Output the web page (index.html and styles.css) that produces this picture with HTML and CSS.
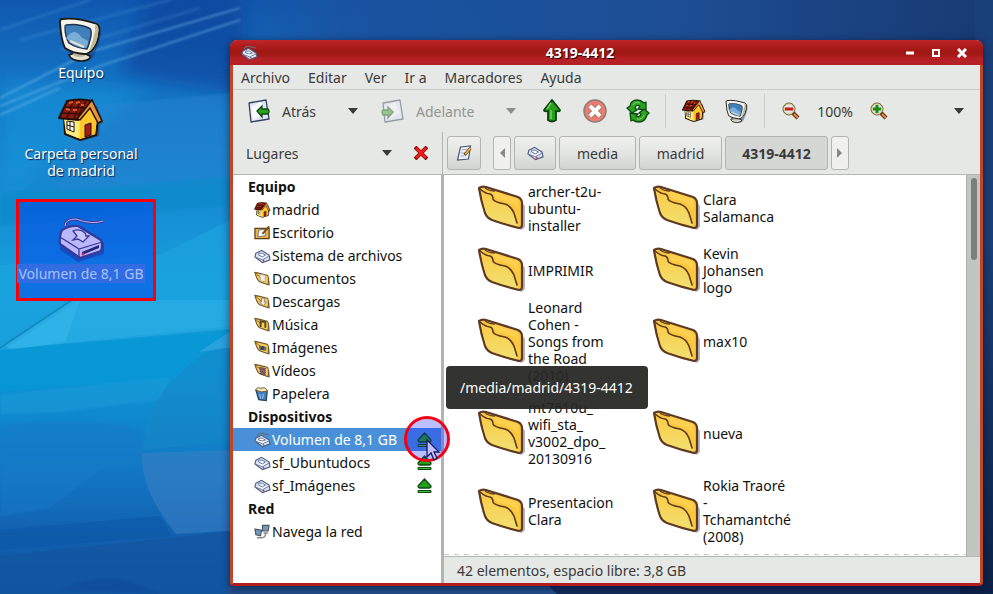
FILE: index.html
```html
<!DOCTYPE html>
<html lang="es">
<head>
<meta charset="utf-8">
<title>4319-4412</title>
<link rel="stylesheet" href="styles.css">
</head>
<body>
<svg class="sprites" aria-hidden="true">
  <symbol id="computer" viewBox="0 0 46 46">
    <path d="M6 8Q28 2 43 11Q44 24 38 34Q36 45 26 46Q14 46 12 40Z" fill="#12306b" opacity=".45"/>
    <path d="M11 39Q22 34 32 40Q33 44 24 45Q13 45 11 39Z" fill="#e6e2d2" stroke="#1d1a15" stroke-width="1.600"/>
    <path d="M15 34L16 40Q22 42 27 40L28 34Z" fill="#bdb69c"/>
    <path d="M4 3Q18 1 39 8Q42 10 41 17Q40 27 35 33Q31 38 26 38Q14 37 7 32Q3 24 2 6Q2 3 4 3Z" fill="#f6f4ea" stroke="#1d1a15" stroke-width="1.800"/>
    <path d="M37 8Q42 10 40 17Q39 28 33 34L31 35Q35 26 37 15Z" fill="#c2b894"/>
    <path d="M8 9Q20 7 31 12Q34 13 33 20Q31 29 29 33Q18 32 11 27Q7 21 7 11Q7 9 8 9Z" fill="#3e7fbc" stroke="#243450" stroke-width="1.400"/>
    <path d="M8 22Q13 15 17 16Q22 18 23 21L30 25Q30 29 28 32Q18 31 12 26Z" fill="#79add8"/>
    <path d="M12 25L26 31" stroke="#e6e2d2" stroke-width="2"/>
  </symbol>
  <symbol id="house" viewBox="0 0 46 44">
    <path d="M10 20L39 8L45 25L42 26L41 38L24 43L10 36Z" fill="#1c2a55" opacity=".5"/>
    <path d="M6 19L7 36L22 42L38 37L40 20L32 6L20 20Z" fill="#f6e360" stroke="#24100b" stroke-width="2"/>
    <path d="M22 20L32 6L39 20L37 36L22 41Z" fill="#ffc62a"/>
    <path d="M6 21L20 23V40L8 35Z" fill="#f7eb84"/>
    <path d="M9 3Q22 0 34 3L20 22L1 20Z" fill="#8e1a10" stroke="#24100b" stroke-width="2"/>
    <path d="M6 9L30 10M3 15L25 16M15 3L9 20M22 3L16 21M28 3L20 18" stroke="#3a0b08" stroke-width="1.5"/>
    <path d="M11 5L15 4M18 5L22 4M8 11L12 12M15 12L19 12M23 7L26 7" stroke="#d85a2a" stroke-width="2"/>
    <path d="M34 2L44 23L40 25L32 10L22 22L19 21Z" fill="#e9943a" stroke="#24100b" stroke-width="1.5"/>
    <path d="M27 27L33 25V37L27 39Z" fill="#a61b1b" stroke="#24100b"/>
    <path d="M9 23L16 24V34L9 31Z" fill="#fff" stroke="#24100b"/>
    <path d="M12 23V33M9 27L16 29" stroke="#24100b"/>
  </symbol>
  <symbol id="drive" viewBox="0 0 46 46">
    <path d="M7 10Q7 3 18 3Q34 9 45 5" fill="none" stroke="#3a3f9a" stroke-width="3"/>
    <path d="M7 10Q7 3 18 3Q34 9 45 5" fill="none" stroke="#b5b0fa"/>
    <path d="M3 18L24 10L46 27V38L20 46L2 34Z" fill="#1a2fa0" opacity=".5"/>
    <path d="M4 14Q12 9 20 10L43 24Q45 30 43 35L22 42L2 28Q1 20 4 14Z" fill="#bab8fb" stroke="#36389a" stroke-width="2.2"/>
    <path d="M2 21L21 33L44 26M21 33V42" stroke="#36389a" stroke-width="1.3" fill="none"/>
    <path d="M24 36L41 29V32L24 39Z" fill="#23247c"/>
    <path d="M15 15Q22 12 27 17L28 20H31L25 26L20 23L15 24L19 20Z" fill="#c9c7ff" stroke="#36389a" stroke-width="1.3"/>
    <circle cx="25" cy="38" r="1.5" fill="#d02060"/>
  </symbol>
  <symbol id="drive-flat" viewBox="0 0 18 16">
    <path d="M2 5L8 2L16 7L17 12L9 15L1 9Z" fill="#dbe3f1" stroke="#495a80" stroke-width="1.2"/>
    <path d="M1 9L9 12L16 8M5 5Q9 4 12 7L9 9L5 7Z" fill="#f7faff" stroke="#60739c"/>
    <circle cx="10" cy="13" r="1" fill="#d33"/>
  </symbol>
  <symbol id="drive-cord" viewBox="0 0 18 16">
    <path d="M3 4Q5 0 9 1L16 3" fill="none" stroke="#646b78" stroke-width="1.2"/>
    <path d="M2 6L8 3L16 8L17 12L9 15L1 9Z" fill="#e3e9f4" stroke="#495a80" stroke-width="1.2"/>
    <path d="M1 9L9 12L16 9M5 6Q9 5 12 8L9 9L5 8Z" fill="#fff" stroke="#60739c"/>
    <circle cx="10" cy="13" r=".8" fill="#d33"/>
  </symbol>
  <linearGradient id="flap" x1="0" y1="0" x2="0" y2="1"><stop offset="0" stop-color="#fbcb45"/><stop offset="1" stop-color="#f1e072"/></linearGradient>
  <symbol id="folder" viewBox="0 -2 50 48">
    <path d="M43 15L47 20V41L44 44L38 42Z" fill="#777b90" opacity=".55"/>
    <path d="M1 2Q4 0 8 1L40 11Q44 13 44 17V39Q44 42 41 42Q28 39 14 34Q9 32 7 27Q3 15 1 2Z" fill="#fbc83c" stroke="#5c3925" stroke-width="2.200" stroke-linejoin="round"/>
    <path d="M3 4Q8 8 12 8Q14 9 14 14Q16 17 27 19Q33 21 35 27L40 40Q26 37 15 33Q10 31 8 26Q5 17 3 4Z" fill="url(#flap)"/>
    <path d="M8 2Q14 5 18 6L40 13V24Q37 17 31 16L18 12Q16 7 8 2Z" fill="#fdd050"/>
    <path d="M2 3Q8 8 12 8Q15 9 15 13Q16 16 27 18Q33 20 36 27L39 37" fill="none" stroke="#5c3925" stroke-width="1.600" stroke-linecap="round"/>
    <path d="M7 2Q11 5 17 5" fill="none" stroke="#5c3925" stroke-width="1.300"/>
  </symbol>
  <symbol id="folder-small" viewBox="0 0 18 16">
    <path d="M4 4L16 7L17 15L8 12Z" fill="#888"/>
    <path d="M1 1L6 2L14 4Q16 5 15 14L6 11Q3 9 1 1Z" fill="#f5cf55" stroke="#7a5630" stroke-width="1.2"/>
    <path d="M1 1L5 5L8 7" stroke="#7a5630" fill="none"/>
  </symbol>
  <symbol id="page-arrow" viewBox="0 0 24 24">
    <path d="M2 4L19 1L22 20L4 23Z" fill="#dfe6f8" stroke="#36415e" stroke-width="1.3" stroke-linejoin="round"/>
    <path d="M4 8L14 3L19 14L6 21Z" fill="#fff" opacity=".8"/>
  </symbol>
  <symbol id="eject" viewBox="0 0 15 16">
    <path d="M7.500 1L14 8Q14 10 12 10H3Q1 10 1 8Z" fill="#23a01c" stroke="#0c4a10" stroke-width="1.3"/>
    <path d="M1 12.500H14V14.500H1Z" fill="#4dbb3d" stroke="#0c4a10"/>
  </symbol>
  <symbol id="lens" viewBox="0 0 18 18">
    <path d="M11 11L16 16" stroke="#5b2a12" stroke-width="4"/>
    <path d="M12 12L16 16" stroke="#f08a3c" stroke-width="2"/>
    <circle cx="7" cy="7" r="6" fill="#e6edc4" stroke="#5a5237"/>
    <circle cx="7" cy="7" r="5" fill="#dfe8ef" stroke="#d9c272"/>
  </symbol>
  <symbol id="caret" viewBox="0 0 12 6"><path d="M1 0H11L6 6Z" fill="currentColor"/></symbol>
</svg>

<main class="desktop">
  <svg class="wallpaper" viewBox="0 0 993 594" preserveAspectRatio="none" aria-hidden="true">
    <defs>
      <linearGradient id="sky" x1="0" y1="0" x2="0" y2="1">
        <stop offset="0" stop-color="#0f58b0"/><stop offset=".12" stop-color="#1470c2"/><stop offset=".3" stop-color="#1786d0"/>
        <stop offset=".48" stop-color="#16a0dc"/><stop offset=".64" stop-color="#0d94d3"/>
        <stop offset=".8" stop-color="#1276c3"/><stop offset=".9" stop-color="#1261b0"/><stop offset="1" stop-color="#0c53a0"/>
      </linearGradient>
      <linearGradient id="dusk"><stop offset=".05" stop-color="#1a55a0" stop-opacity="0"/><stop offset=".2" stop-color="#1a53a0" stop-opacity=".9"/><stop offset=".6" stop-color="#1d4e94"/><stop offset="1" stop-color="#183a72"/></linearGradient>
      <linearGradient id="night" x1="0" y1="0" x2="0" y2="1"><stop offset=".4" stop-color="#0d2247" stop-opacity="0"/><stop offset="1" stop-color="#0d2247"/></linearGradient>
      <filter id="soft" x="-30%" y="-30%" width="160%" height="160%"><feGaussianBlur stdDeviation="9"/></filter>
      <filter id="feather"><feGaussianBlur stdDeviation="1"/></filter>
    </defs>
    <rect width="993" height="594" fill="url(#sky)"/>
    <path d="M150 -10H245V95L120 75Z" fill="#0a3f98" opacity=".6" filter="url(#soft)"/>
    <path d="M0 80L150 90L0 200Z" fill="#189ade" opacity=".5" filter="url(#soft)"/>
    <path d="M70 108L240 92V185L60 190Z" fill="#2b86d2" opacity=".4" filter="url(#feather)"/>
    <g stroke="#6db8ea" fill="none" filter="url(#feather)">
      <path d="M0 98L90 52L240 8M0 106L100 66L240 20M0 115L60 88" stroke-width="2" opacity=".5"/>
      <path d="M20 40L170 0M60 50L200 8M0 30L90 0" stroke-width="3" opacity=".16"/>
    </g>
    <path d="M0 193Q120 188 240 175V205L0 226Z" fill="#0d8bcb" opacity=".7" filter="url(#feather)"/>
    <path d="M0 265L160 255L240 215V325L0 350Z" fill="#1ea5df" opacity=".6"/>
    <path d="M5 349L80 300H240V328L140 337Z" fill="#36b9ea" opacity=".4"/>
    <path d="M5 345L72 300H80L65 342L12 350Z" fill="#3fbff0" opacity=".4"/>
    <path d="M0 348L72 300" stroke="#1689c5" stroke-width="2"/>
    <path d="M0 350L240 330V378L120 382L0 392Z" fill="#0597d6" opacity=".6"/>
    <path d="M199 352L240 325V347Z" fill="#58b2e6" opacity=".4"/>
    <path d="M0 395L170 377L160 400L60 412L0 414Z" fill="#28a2e0" opacity=".35" filter="url(#feather)"/>
    <path d="M177 377Q210 340 240 350V440L143 450Q145 405 177 377Z" fill="#1886c9" opacity=".55"/>
    <path d="M0 425Q90 415 142 430V465L100 470L50 508L0 516Z" fill="#197ac8" opacity=".5" filter="url(#feather)"/>
    <path d="M142 453L240 450V530L176 534Q140 490 142 453Z" fill="#3d7fc4" opacity=".55"/>
    <path d="M0 530L160 516L172 536L0 550Z" fill="#0d59a8" opacity=".7"/>
    <path d="M0 556L240 530V594H0Z" fill="#14559f" opacity=".75"/>
    <path d="M60 590Q110 565 160 594Z" fill="#0a4593" opacity=".4" filter="url(#feather)"/>
    <rect x="180" width="813" height="42" fill="url(#dusk)"/>
    <rect x="400" y="580" width="593" height="14" fill="#142d5c"/>
    <path d="M228 582H545L557 594H228Z" fill="#244f8c"/>
    <rect x="975" width="18" height="594" fill="#1a4078"/>
    <rect x="960" width="33" height="594" fill="url(#night)"/>
  </svg>

  <nav class="shortcuts" aria-label="Escritorio">
    <a class="shortcut" href="#equipo"><svg class="big"><use href="#computer"/></svg><span>Equipo</span></a>
    <a class="shortcut" href="#carpeta"><svg class="big"><use href="#house"/></svg><span>Carpeta personal de madrid</span></a>
    <a class="shortcut volume" href="#volumen"><svg class="big"><use href="#drive"/></svg><span>Volumen de 8,1 GB</span></a>
  </nav>

  <section class="window" aria-label="4319-4412">
    <header class="titlebar">
      <svg class="title-icon"><use href="#drive-cord"/></svg>
      <h1>4319-4412</h1>
      <div class="controls">
        <button aria-label="Minimizar"><svg viewBox="0 0 10 10"><path d="M1 5H9" stroke="#fff" stroke-width="3"/></svg></button>
        <button aria-label="Maximizar"><svg viewBox="0 0 10 10"><path d="M2 2H8V8H2Z" fill="none" stroke="#fff" stroke-width="2"/></svg></button>
        <button aria-label="Cerrar"><svg viewBox="0 0 10 10"><path d="M1 1L9 9M9 1L1 9" stroke="#fff" stroke-width="3"/></svg></button>
      </div>
    </header>

    <nav class="menubar" aria-label="Menú">
      <button>Archivo</button><button>Editar</button><button>Ver</button><button>Ir a</button><button>Marcadores</button><button>Ayuda</button>
    </nav>

    <div class="toolbar">
      <button class="nav-button"><svg class="tool-icon" viewBox="0 0 24 24"><use href="#page-arrow"/><path d="M10 12L15 7V10H21Q23 12 21 15H15V18Z" fill="#2aa31e" stroke="#0d4710" stroke-width="1.3"/></svg>Atrás</button>
      <button class="drop" aria-label="Historial anterior"><svg class="caret"><use href="#caret"/></svg></button>
      <button class="nav-button forward" disabled><svg class="tool-icon" viewBox="0 0 24 24"><use href="#page-arrow"/><path d="M12 13L7 8V11H2Q0 13 2 16H7V19Z" fill="#2aa31e" stroke="#0d4710" stroke-width="1.3"/></svg>Adelante</button>
      <button class="drop dim" aria-label="Historial siguiente"><svg class="caret"><use href="#caret"/></svg></button>
      <button class="tool" aria-label="Subir"><svg class="tool-icon" viewBox="0 0 24 24"><path d="M12 1L20 11Q20 13 16 12L16 21Q12 24 8 21L8 12Q4 13 4 11Z" fill="#25a11c" stroke="#0b3f0d" stroke-width="1.8"/><path d="M11 4L7 10M11 11V20" stroke="#72d35c" stroke-width="1.5"/></svg></button>
      <button class="tool" aria-label="Detener" disabled><svg class="tool-icon" viewBox="0 0 24 24"><circle cx="12" cy="12" r="11" fill="#f07b6f" stroke="#857f7b" stroke-width="1.5"/><path d="M7 7L17 17M17 7L7 17" stroke="#8d7874" stroke-width="6"/><path d="M7 7L17 17M17 7L7 17" stroke="#fff" stroke-width="4"/></svg></button>
      <button class="tool" aria-label="Recargar"><svg class="tool-icon" viewBox="0 0 24 24"><path d="M1 9L4 7Q5 1 11 1Q15 1 18 4L20 3L20 11L12 10L14 7Q10 5 9 9L11 11L6 14Z" fill="#2da321" stroke="#0b4a10" stroke-width="1.3" stroke-linejoin="round"/><path d="M23 14L21 16Q19 23 13 23Q9 23 7 21L5 22L4 14L12 15L10 17Q14 19 15 15L13 14L18 10Z" fill="#2da321" stroke="#0b4a10" stroke-width="1.3" stroke-linejoin="round"/><path d="M7 6Q9 2 14 4M11 20Q16 21 18 16" stroke="#80da66" fill="none"/></svg></button>
      <span class="separator"></span>
      <button class="tool" aria-label="Carpeta personal"><svg class="tool-icon"><use href="#house"/></svg></button>
      <button class="tool" aria-label="Equipo"><svg class="tool-icon"><use href="#computer"/></svg></button>
      <span class="separator"></span>
      <button class="lens-button" aria-label="Reducir"><svg class="lens" viewBox="0 0 18 18"><use href="#lens"/><path d="M3 7H11" stroke="#d01818" stroke-width="3"/></svg></button>
      <output class="zoom">100%</output>
      <button class="lens-button" aria-label="Ampliar"><svg class="lens" viewBox="0 0 18 18"><use href="#lens"/><path d="M3 7H11M7 3V11" stroke="#188a14" stroke-width="3"/></svg></button>
      <button class="drop overflow" aria-label="Más"><svg class="caret"><use href="#caret"/></svg></button>
    </div>

    <div class="location">
      <div class="side-header">
        <span>Lugares</span>
        <button class="drop" aria-label="Elegir panel"><svg class="caret"><use href="#caret"/></svg></button>
        <button class="close-side" aria-label="Cerrar panel"><svg viewBox="0 0 14 14"><path d="M1 1L13 13M13 1L1 13" stroke="#7d0d0d" stroke-width="4"/><path d="M2 2L12 12M12 2L2 12" stroke="#f01c1c" stroke-width="2.500"/></svg></button>
      </div>
      <nav class="path" aria-label="Ruta">
        <button class="crumb edit" aria-label="Editar ruta"><svg viewBox="0 0 16 16"><path d="M4 2L14 1L12 14L1 15Z" fill="#eef2fb" stroke="#4c5674" stroke-width="1.2"/><path d="M5 5L11 4M4 8L9 8M4 11L8 11" stroke="#9daac8"/><path d="M8 10L14 3" stroke="#7a5220" stroke-width="3"/><path d="M9 9L14 3" stroke="#f5b43c" stroke-width="1.500"/></svg></button>
        <button class="crumb step" aria-label="Anterior"><svg viewBox="0 0 6 10"><path d="M6 0V10L1 5Z" fill="#888"/></svg></button>
        <button class="crumb disk" aria-label="Sistema de archivos"><svg><use href="#drive-flat"/></svg></button>
        <button class="crumb media">media</button>
        <button class="crumb madrid">madrid</button>
        <button class="crumb current">4319-4412</button>
        <button class="crumb step" aria-label="Siguiente"><svg viewBox="0 0 6 10"><path d="M0 0V10L5 5Z" fill="#888"/></svg></button>
      </nav>
    </div>

    <div class="panes">
      <aside class="places">
        <h2>Equipo</h2>
        <ul>
          <li><svg><use href="#house"/></svg><a href="#m">madrid</a></li>
          <li><svg viewBox="0 0 18 16"><path d="M1 3H16V14H1Z" fill="#e9b44a" stroke="#5e3c17" stroke-width="1.300"/><path d="M5 5L12 4V11L4 12Z" fill="#f5f7fc" stroke="#777"/><path d="M9 9L16 1" stroke="#7a4b15" stroke-width="2"/></svg><a href="#e">Escritorio</a></li>
          <li><svg><use href="#drive-flat"/></svg><a href="#s">Sistema de archivos</a></li>
          <li><svg viewBox="0 0 18 16"><use href="#folder-small"/><path d="M6 3L12 4V11L7 10Z" fill="#f0eee6" stroke="#b5ab92"/></svg><a href="#d">Documentos</a></li>
          <li><svg viewBox="0 0 18 16"><use href="#folder-small"/><path d="M8 4H11V8H13L10 12L6 8H8Z" fill="#eee" stroke="#8c8674"/></svg><a href="#g">Descargas</a></li>
          <li><svg viewBox="0 0 18 16"><use href="#folder-small"/><path d="M7 10V4L12 5V11" fill="none" stroke="#54452d" stroke-width="2"/></svg><a href="#u">Música</a></li>
          <li><svg viewBox="0 0 18 16"><use href="#folder-small"/><path d="M5 5L13 7V11L6 10Z" fill="#68705e"/><circle cx="9" cy="8" r="2" fill="#344b65"/></svg><a href="#i">Imágenes</a></li>
          <li><svg viewBox="0 0 18 16"><use href="#folder-small"/><path d="M6 4L12 5V12L7 11Z" fill="#815874" stroke="#483044" stroke-dasharray="1 1"/></svg><a href="#v">Vídeos</a></li>
          <li><svg viewBox="0 0 18 16"><path d="M2 4L14 5L13 15L5 14Z" fill="#437fc0" stroke="#25405e" stroke-width="1.300"/><path d="M2 4Q3 0 7 2Q13 0 14 5Q8 7 2 4Z" fill="#f2e7bb" stroke="#6e5530"/><path d="M6 8L7 13M10 8L9 13" stroke="#a9cbed"/></svg><a href="#p">Papelera</a></li>
        </ul>
        <h2>Dispositivos</h2>
        <ul>
          <li class="selected"><svg><use href="#drive-cord"/></svg><a href="#v8">Volumen de 8,1 GB</a><button class="eject" aria-label="Expulsar Volumen de 8,1 GB"><svg><use href="#eject"/></svg></button>
            <svg class="pointer-mark" viewBox="0 0 46 46" aria-hidden="true"><circle cx="23" cy="23" r="21.500" fill="#1010ff" fill-opacity=".27" stroke="#f40015" stroke-width="3"/><path d="M23 24V41L27 37L30 44L33 42L30 36H35Z" fill="#c2c0ff" stroke="#181860" stroke-width="1.300"/></svg></li>
          <li><svg><use href="#drive-flat"/></svg><a href="#su">sf_Ubuntudocs</a><button class="eject" aria-label="Expulsar sf_Ubuntudocs"><svg><use href="#eject"/></svg></button></li>
          <li><svg><use href="#drive-flat"/></svg><a href="#si">sf_Imágenes</a><button class="eject" aria-label="Expulsar sf_Imágenes"><svg><use href="#eject"/></svg></button></li>
        </ul>
        <h2>Red</h2>
        <ul>
          <li><svg viewBox="0 0 18 16"><path d="M9 1L16 1L15 7L9 7Z" fill="#6c9ac7" stroke="#555" stroke-width="1.200"/><path d="M1 5L8 6L7 12L2 11Z" fill="#6c9ac7" stroke="#555" stroke-width="1.200"/><path d="M10 9H15M3 14H8M8 14Q13 14 12 9" stroke="#8a8a86" stroke-width="1.500" fill="none"/></svg><a href="#n">Navega la red</a></li>
        </ul>
      </aside>

      <div class="viewer">
        <div class="files">
          <div class="grid">
            <a class="file" href="#1"><svg><use href="#folder"/></svg><span>archer-t2u-<wbr>ubuntu-<wbr>installer</span></a>
            <a class="file" href="#2"><svg><use href="#folder"/></svg><span>Clara Salamanca</span></a>
            <a class="file" href="#3"><svg><use href="#folder"/></svg><span>IMPRIMIR</span></a>
            <a class="file" href="#4"><svg><use href="#folder"/></svg><span>Kevin Johansen logo</span></a>
            <a class="file" href="#5"><svg><use href="#folder"/></svg><span>Leonard<br>Cohen -<br>Songs from<br>the Road<br>(2010)</span></a>
            <a class="file" href="#6"><svg><use href="#folder"/></svg><span>max10</span></a>
            <a class="file" href="#7"><svg><use href="#folder"/></svg><span>mt7610u_<br>wifi_sta_<br>v3002_dpo_<br>20130916</span></a>
            <a class="file" href="#8"><svg><use href="#folder"/></svg><span>nueva</span></a>
            <a class="file" href="#9"><svg><use href="#folder"/></svg><span>Presentacion<br>Clara</span></a>
            <a class="file" href="#10"><svg><use href="#folder"/></svg><span>Rokia Traoré<br>-<br>Tchamantché<br>(2008)</span></a>
          </div>
          <div class="scrollbar"><div class="thumb"></div></div>
          <div class="tooltip" role="tooltip">/media/madrid/4319-4412</div>
        </div>
        <footer class="status">42 elementos, espacio libre: 3,8 GB</footer>
      </div>
    </div>
  </section>
</main>
</body>
</html>
```
FILE: styles.css
```css
* { box-sizing: border-box; }

body {
  margin: 0;
  font: 14px/17px "Noto Sans", "Open Sans", sans-serif;
  color: #3a3a3a;
}

h1, h2, ul { margin: 0; padding: 0; }
ul { list-style: none; }
a { color: inherit; text-decoration: none; }
svg { display: block; flex: none; }

button {
  font: inherit;
  color: inherit;
  background: none;
  border: 0;
  padding: 0;
  display: flex;
  align-items: center;
  justify-content: center;
}

.sprites { position: absolute; width: 0; height: 0; }

.desktop {
  position: relative;
  display: grid;
  grid-template-columns: 230px 1fr;
  min-height: 100vh;
  padding: 0 10px 8px 0;
  background: #14569f;
}

.wallpaper { position: absolute; inset: 0; width: 100%; height: 100%; }

/* Desktop shortcuts */
.shortcuts {
  position: relative;
  display: flex;
  flex-direction: column;
  gap: 16px;
  width: 130px;
  margin: 16px 0 0 16px;
}
.shortcut {
  display: flex;
  flex-direction: column;
  align-items: center;
  gap: 2px;
  color: #fff;
  text-align: center;
  text-shadow: 1px 1px 1px #0a2050;
}
.big { width: 46px; height: 46px; }

.volume { position: relative; margin-top: 21px; color: #a3c4fa; text-shadow: none; }
.volume svg, .volume span { position: relative; z-index: 1; }
.volume span { padding: 1px 2px; background: #336be2; white-space: nowrap; }
.volume::before {
  content: "";
  position: absolute;
  inset: -17px -10px -18px 0;
  border: 3px solid #f80008;
  background: rgba(0, 60, 235, .48);
}

/* Window frame */
.window {
  position: relative;
  display: flex;
  flex-direction: column;
  margin-top: 40px;
  border: 3px solid #c24626;
  border-top: 0;
  border-bottom-color: #b01c20;
  border-radius: 7px 7px 4px 4px;
  background: #e6e8e5;
  box-shadow: 0 2px 10px rgba(0, 10, 40, .6);
}
.titlebar {
  display: grid;
  grid-template-columns: 20px 1fr 68px;
  align-items: center;
  height: 25px;
  margin: 0 -3px;
  padding: 0 16px 0 11px;
  border-radius: 7px 7px 0 0;
  background: linear-gradient(#c0262a, #ad1c1c 25%, #a01814 45%, #a41916 60%, #b62126 75%, #b32026);
}
.title-icon { width: 17px; height: 16px; }
.titlebar h1 {
  font-size: 14px;
  font-weight: bold;
  color: #fff;
  text-align: center;
  text-shadow: 1px 1px 1px #200;
}
.controls { display: flex; gap: 16px; justify-content: flex-end; }
.controls svg { width: 10px; height: 10px; }

.menubar {
  display: flex;
  gap: 18px;
  height: 25px;
  padding: 0 8px;
  border-bottom: 1px solid #cbccca;
}

/* Toolbar */
.toolbar { display: flex; align-items: center; height: 42px; padding-left: 5px; }
.toolbar button { height: 36px; }
.nav-button { width: 96px; padding-left: 9px; gap: 11px; }
.toolbar .nav-button { justify-content: flex-start; }
.toolbar .forward { width: 120px; color: #929491; }
.forward svg { opacity: .45; }
.tool-icon { width: 24px; height: 24px; }
.drop { width: 38px; }
.dim { color: #8c8e8b; }
.caret { width: 12px; height: 6px; }
.tool { width: 43px; }
.separator { width: 1px; height: 34px; margin: 0 6px; background: #cdcecb; }
.lens-button { width: 40px; }
.lens { width: 18px; height: 18px; }
.zoom { width: 48px; text-align: center; }
.overflow { margin: 0 2px 0 auto; }

/* Location row */
.location { display: grid; grid-template-columns: 209px 1fr; height: 42px; }
.side-header { display: flex; align-items: center; padding: 0 14px 0 13px; }
.side-header .drop { margin-left: auto; }
.close-side svg { width: 14px; height: 14px; margin-left: 8px; }
.path { display: flex; align-items: center; gap: 3px; padding-left: 4px; border-left: 1px solid #b4b6b3; }
.crumb {
  height: 34px;
  border: 1px solid #b2b4b1;
  border-radius: 3px;
  background: linear-gradient(#f0f1ef, #e3e5e2 50%, #d2d4d1);
}
.crumb svg { width: 17px; height: 16px; }
.edit { width: 34px; margin-right: 9px; }
.step { width: 18px; background: #f0f1ef; }
.crumb.step svg { width: 6px; height: 10px; }
.disk { width: 42px; }
.media { width: 77px; }
.madrid { width: 83px; }
.current { width: 103px; font-weight: bold; background: #d5d7d4; }

/* Panes */
.panes {
  display: grid;
  grid-template-columns: 211px 1fr;
  flex: 1;
  border-top: 1px solid #b4b6b3;
}
.places {
  border-right: 3px solid #b2b4b1;
  background: #fefffe;
  color: #111;
  line-height: 23px;
}
.places h2 { padding-left: 15px; font-size: 14px; font-weight: bold; }
.places li {
  position: relative;
  display: flex;
  align-items: center;
  gap: 1px;
  height: 23px;
  padding: 0 9px 0 21px;
}
.places li > svg { width: 17px; height: 16px; }
.places .selected { background: #4a90d9; color: #fff; }
.eject { margin-left: auto; }
.eject svg { width: 15px; height: 16px; }
.places li > .pointer-mark {
  position: absolute;
  z-index: 2;
  top: -12px;
  right: -9px;
  width: 46px;
  height: 46px;
}

.viewer { display: flex; flex-direction: column; min-width: 0; }
.files {
  position: relative;
  display: grid;
  grid-template-columns: 1fr 14px;
  flex: 1;
  background: #fefffe;
}
.grid {
  display: grid;
  grid-template-columns: 175px 175px;
  grid-template-rows: 62px 62px 80px 104px 52px;
  padding: 2px 0 0 34px;
  background: repeating-linear-gradient(90deg, #c8cac7 0 5px, transparent 5px 10px) 0 100% / 100% 1px no-repeat;
  border-bottom: 1px solid #fefffe;
}
.file { display: flex; align-items: center; color: #111; }
.file svg { width: 50px; height: 48px; }
.file span { width: 90px; }
.scrollbar { padding: 3px; border-left: 1px solid #aeb0ad; background: #c3c5c2; }
.thumb { width: 6px; height: 82px; margin-left: 1px; border-radius: 3px; background: #7d7f7c; }
.tooltip {
  position: absolute;
  top: 191px;
  left: 2px;
  padding: 13px 15px 13px 14px;
  border-radius: 4px;
  background: rgba(38, 38, 36, .94);
  color: #fff;
}
.status { height: 27px; padding: 5px 13px; border-top: 1px solid #b4b6b3; }
```
